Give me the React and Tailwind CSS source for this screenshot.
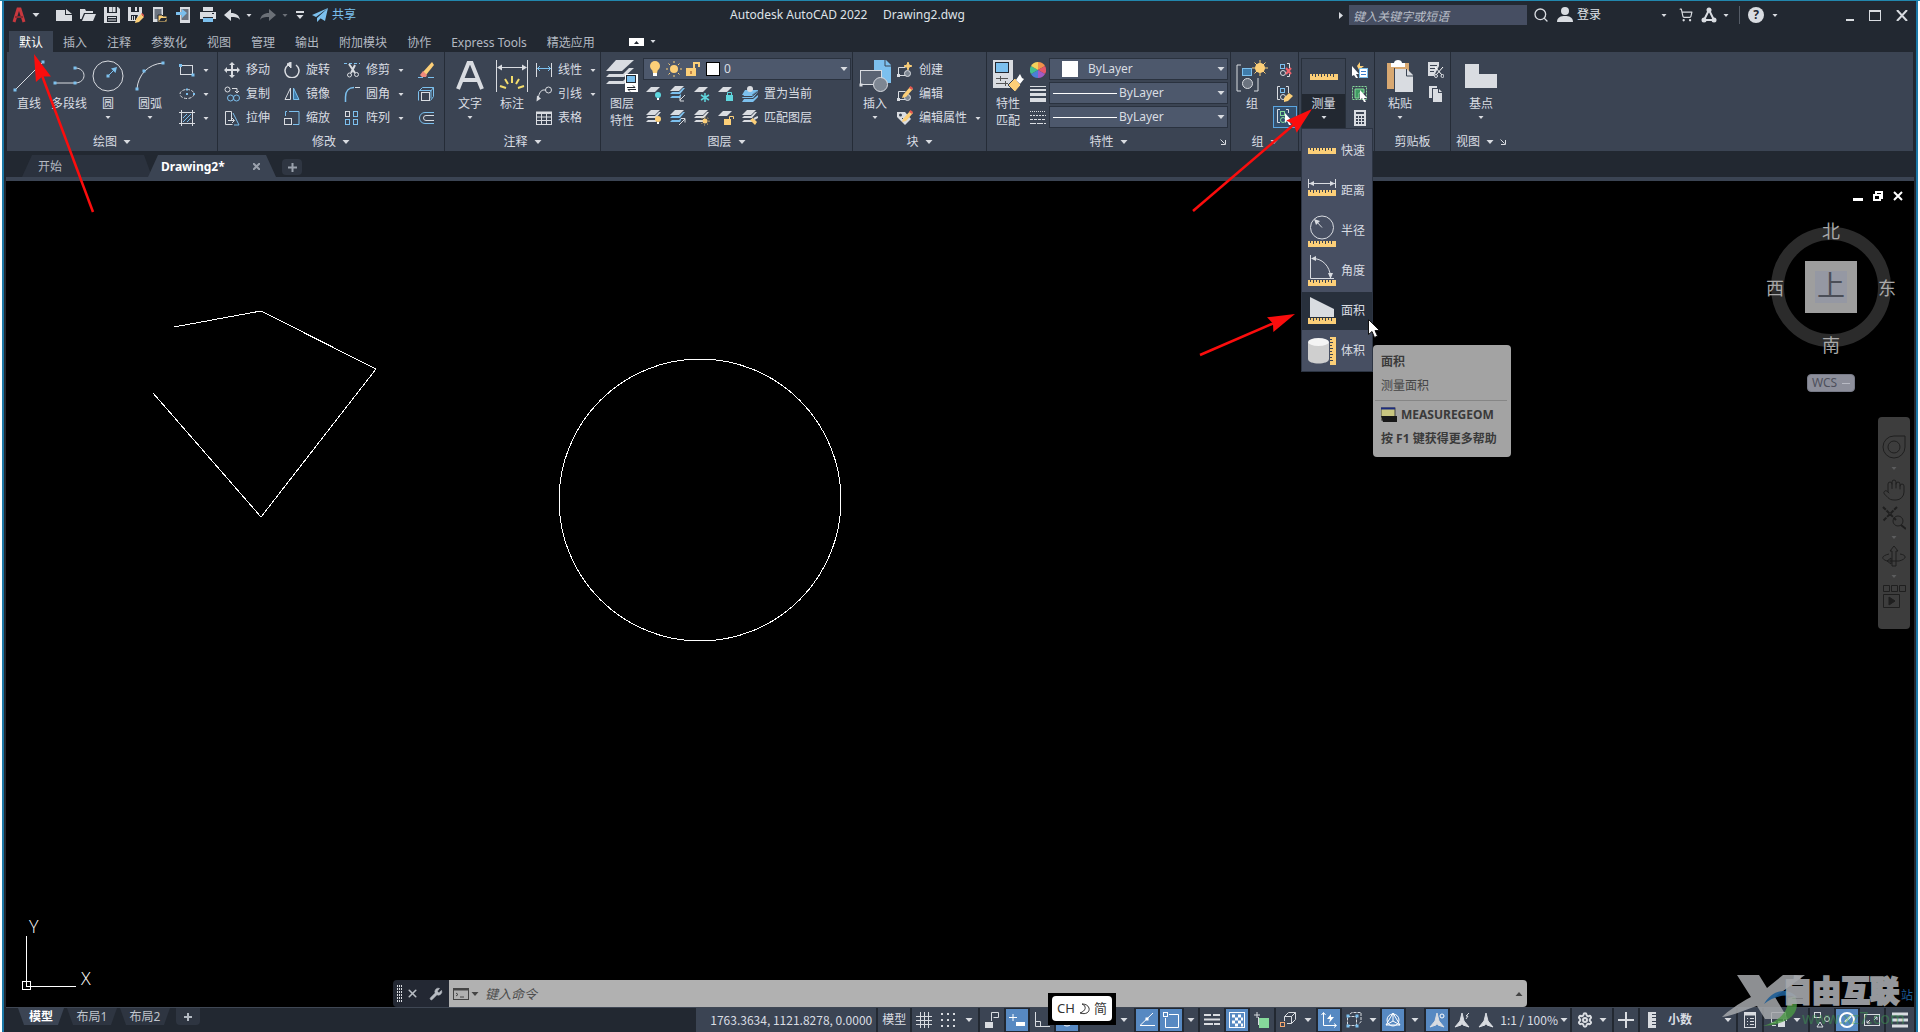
import { Search, Wrench, ShoppingCart, Settings, Hand, X } from "lucide-react"

const W = "#d9dce1"
const B = "#7cc0ee"
const Y = "#fccf78"
const G = "#86d99b"

const Svg = ({ w = 16, h = w, vb, children, className = "" }) => (
  <svg
    width={w}
    height={h}
    viewBox={vb || `0 0 ${w} ${h}`}
    fill="none"
    stroke={W}
    aria-hidden="true"
    className={`shrink-0 ${className}`}
  >
    {children}
  </svg>
)

const Caret = ({ big, className = "" }) =>
  big ? (
    <Svg w={8} h={4} className={className}>
      <path d="M0.5 0h7L4 4z" fill={W} stroke="none" />
    </Svg>
  ) : (
    <Svg w={6} h={3} className={className}>
      <path d="M0.5 0h5L3 3z" fill={W} stroke="none" />
    </Svg>
  )

const Dot = ({ x, y, c = B, s = 3 }) => (
  <rect x={x - s / 2} y={y - s / 2} width={s} height={s} fill={c} stroke="none" />
)

/* ---------- quick access icons ---------- */

const quickIcons = [
  {
    name: "新建",
    icon: (
      <g fill={W} stroke="none">
        <path d="M0 3h9v5h7v6H0z" />
        <path d="M10 2l6 5h-6z" />
      </g>
    ),
  },
  {
    name: "打开",
    icon: (
      <g fill={W} stroke="none">
        <path d="M0 2h5l1 2h7v2H4L1.5 12H0z" />
        <path d="M5 7h11l-3 7H2z" />
      </g>
    ),
  },
  {
    name: "保存",
    icon: (
      <g stroke="none">
        <path d="M0 0h14l2 2v14H0z" fill={W} />
        <path d="M3 0h10v6H3zM3 9h10v6H3z" fill="#222831" />
        <path d="M8.5 0h3v5h-3zM4 10h8v1H4zM4 12.5h8v1H4zM5 0h3v5H5z" fill={W} />
      </g>
    ),
  },
  {
    name: "另存为",
    icon: (
      <g stroke="none">
        <path d="M0 0h14v8l-5 6H0z" fill={W} />
        <path d="M3 0h8v5H3zM3 8h7l-2 5H3z" fill="#222831" />
        <path d="M7 0h2v4H7zM4 9h1v4H4zM6 9h1v4H6z" fill={W} />
        <path d="M8 12l5-5 3 3-5 5-4 1z" fill={Y} />
        <path d="M13 7l1-1 2 2v2z" fill="#e4574f" />
      </g>
    ),
  },
  {
    name: "从移动设备打开",
    icon: (
      <g stroke="none">
        <path d="M1 0h10v15H1z" fill={W} />
        <path d="M2.5 2h7v10h-7z" fill="#6b737f" />
        <path d="M6 8h4l1 1h4v6H6z" fill={Y} stroke="#222831" />
        <path d="M7 14l2-3h6l-2 3z" fill="#222831" />
      </g>
    ),
  },
  {
    name: "保存到移动设备",
    icon: (
      <g stroke="none">
        <path d="M4 0h10v16H4z" fill={W} />
        <path d="M5.5 2h7v11h-7z" fill="#6b737f" />
        <path d="M0 5h6V2l5 4-5 5V8H0z" fill={B} />
      </g>
    ),
  },
  {
    name: "打印",
    icon: (
      <g stroke="none">
        <path d="M3 0h10v4H3zM0 5h16v7h-3v-2H3v2H0z" fill={W} />
        <path d="M3 11h10v4H3z" fill={B} />
        <path d="M12 6h2v1h-2z" fill="#222831" />
      </g>
    ),
  },
]

/* ---------- draw ---------- */

const LineIcon = (
  <Svg w={32}>
    <path d="M2 30L30 2" />
    <Dot x={2} y={30} />
    <Dot x={30} y={2} />
  </Svg>
)
const PolylineIcon = (
  <Svg w={32}>
    <path d="M2 23h20c12 0 12-15 0-15" />
    <Dot x={2} y={23} />
    <Dot x={22} y={23} />
    <Dot x={22} y={8} />
  </Svg>
)
const CircleIcon = (
  <Svg w={32}>
    <circle cx="16" cy="16" r="15" />
    <path d="M16 16l7-7" stroke={B} />
    <path d="M25 7l-1.5 6-4.5-4.5z" fill={B} stroke="none" />
    <Dot x={16} y={16} />
  </Svg>
)
const ArcIcon = (
  <Svg w={32}>
    <path d="M3 29C4 15 14 4 29 3" />
    <Dot x={3} y={29} />
    <Dot x={10} y={11} />
    <Dot x={29} y={3} />
  </Svg>
)
const RectIcon = (
  <Svg>
    <rect x="1.5" y="3.5" width="12" height="9" />
    <Dot x={1.5} y={3.5} />
    <Dot x={14} y={13} />
  </Svg>
)
const EllipseIcon = (
  <Svg>
    <ellipse cx="8" cy="8" rx="7" ry="4.5" strokeDasharray="3 1.5" />
    <Dot x={8} y={8} s={2} />
    <Dot x={8} y={3.5} s={2} />
    <Dot x={15} y={8} s={2} />
  </Svg>
)
const HatchIcon = (
  <Svg>
    <path d="M0 2.5h16M0 13.5h16M2.5 0v16M13.5 0v16" />
    <path d="M4 8l4-4M4 12l8-8M8 12l4-4" stroke={B} />
  </Svg>
)

/* ---------- modify ---------- */

const MoveIcon = (
  <Svg>
    <path d="M8 2v12M2 8h12" strokeWidth="2" />
    <path d="M8 0l3 3H5zM8 16l3-3H5zM0 8l3-3v6zM16 8l-3-3v6z" fill={W} stroke="none" />
  </Svg>
)
const CopyIcon = (
  <Svg>
    <circle cx="3.5" cy="3.5" r="2.5" />
    <circle cx="6.5" cy="12" r="3" stroke={B} />
    <circle cx="12.5" cy="12" r="3" stroke={B} />
    <path d="M8 2.5h5v4M11 5l2 2 2-2" />
  </Svg>
)
const StretchIcon = (
  <Svg>
    <path d="M1.5 1.5h6v9M1.5 1.5v13h7M4 10.5h6M8 8l2.5 2.5L8 13" />
    <path d="M9 3l6 12h-5" stroke={B} />
  </Svg>
)
const RotateIcon = (
  <Svg>
    <path d="M4 3a7 7 0 1 0 8 0" strokeWidth="1.5" />
    <path d="M7 0v6L3 2z" fill={W} />
  </Svg>
)
const MirrorIcon = (
  <Svg>
    <path d="M6.5 2v11.5H1z" />
    <path d="M9.5 2v11.5H15z" stroke={B} fill="#3f7cab" />
  </Svg>
)
const ScaleIcon = (
  <Svg>
    <path d="M5 1.5h10v13H9" stroke={B} />
    <rect x="0.5" y="8.5" width="7" height="6" />
    <path d="M3 1.5H1.5V6" stroke={B} />
  </Svg>
)
const TrimIcon = (
  <Svg>
    <path d="M0 1.5h16" stroke={B} strokeDasharray="3 2" />
    <path d="M5 2l6 9M11 3l-4 8" strokeWidth="2" />
    <circle cx="5.5" cy="13" r="2" />
    <circle cx="12.5" cy="12.5" r="2" />
  </Svg>
)
const FilletIcon = (
  <Svg>
    <path d="M1.5 16V11C1.5 5 5 1.5 10 1.5" stroke={B} strokeWidth="1.5" />
    <path d="M11 1.5h5" />
  </Svg>
)
const ArrayIcon = (
  <Svg>
    <rect x="1.5" y="1.5" width="4" height="5" />
    <rect x="9.5" y="1.5" width="4" height="5" stroke={B} />
    <rect x="1.5" y="9.5" width="4" height="5" stroke={B} />
    <rect x="9.5" y="9.5" width="4" height="5" stroke={B} />
  </Svg>
)
const EraseIcon = (
  <Svg>
    <path d="M5 10L14 0l2 3-8 10z" fill={Y} stroke="none" />
    <path d="M2 13l3-4 4 4-1 2H4z" fill="#f08a7c" stroke="none" />
    <path d="M0 15.5h5M10 15.5h6" stroke={B} />
  </Svg>
)
const ExplodeIcon = (
  <Svg>
    <rect x="3.5" y="6.5" width="8" height="8" />
    <path d="M0.5 5.5l4-4h11v9l-3 4M0.5 5.5v9M12.5 5.5l3-4M1 4.5h12v8" stroke={B} />
  </Svg>
)
const OffsetIcon = (
  <Svg>
    <path d="M16 2.5H7a5.5 5.5 0 0 0 0 11h9" stroke={B} />
    <path d="M16 5.5H8a2.5 2.5 0 0 0 0 5h8" />
  </Svg>
)

/* ---------- annotate ---------- */

const TextIcon = (
  <Svg w={32}>
    <path d="M4 29L14.5 3h3L28 29M8.5 20h15" strokeWidth="4" />
  </Svg>
)
const DimIcon = (
  <Svg w={32}>
    <path d="M0.5 0v32M31.5 0v32M2 7.5h28" />
    <path d="M1 7.5l5-3v6zM31 7.5l-5-3v6z" fill={W} stroke="none" />
    <path
      d="M16 16v7M9 19l3 5M23 19l-3 5M4 26l6 2M28 26l-6 2"
      stroke="#f3dc6c"
      strokeWidth="2"
    />
  </Svg>
)
const LinearIcon = (
  <Svg>
    <path d="M0.5 1v14M15.5 1v14" />
    <path d="M1 6.5h14M4 4L1.5 6.5 4 9M12 4l2.5 2.5L12 9" stroke={B} />
  </Svg>
)
const LeaderIcon = (
  <Svg>
    <circle cx="12.5" cy="4" r="3" />
    <path d="M10 4H7C4 5 3 8 2 13" />
    <path d="M0.5 15.5l0.5-6 4 3z" fill={W} stroke="none" />
  </Svg>
)
const TableIcon = (
  <Svg>
    <rect x="0.5" y="2" width="15" height="12.5" />
    <path d="M1 3h14" strokeWidth="2" />
    <path d="M1 7h14M1 10.5h14M5.5 3v11M10.5 3v11" />
  </Svg>
)

/* ---------- layers ---------- */

const LayerPropsIcon = (
  <Svg w={32}>
    <g fill={W} stroke="none">
      <path d="M10 0h18L16 11H0z" />
      <path d="M3 14h14l6-6 5 0-10 9H0zM3 21h14l6-6 5 0-10 9H0z" />
      <rect x="19" y="14" width="13" height="18" fill="#fff" />
    </g>
    <rect x="20.5" y="15.5" width="9" height="7" fill={B} stroke="#222831" />
    <path d="M21 27.5h8l-2-2M30 29.5h-8l2 2" stroke="#222831" />
  </Svg>
)

const Sheets = ({ blue }) => (
  <g fill={W} stroke="none">
    <path d="M5 0h9L9 5H0z" />
    <path d="M2 6h7l4-4h2l-5 6H0zM2 10h7l2-2v2l-1 2H0z" fill={blue ? B : W} />
  </g>
)
const Sheet = () => <path d="M5 1h9L9 6H0z" fill={W} stroke="none" />
const Bulb = ({ x, y, c }) => (
  <g stroke="none">
    <circle cx={x} cy={y} r="3" fill={c} />
    <rect x={x - 1} y={y + 3} width="2" height="2" fill="#fff" />
  </g>
)

const layerRow2 = [
  <Svg key="off"><Sheet /><Bulb x={12} y={9} c="#5fd6de" /></Svg>,
  <Svg key="iso"><Sheets blue /><path d="M15 9l-5 5M10 11v4h4" /></Svg>,
  <Svg key="frz"><Sheet /><path d="M11 7v9M7 9l8 5M15 9l-8 5" stroke="#5fd6de" strokeWidth="1.5" /></Svg>,
  <Svg key="lck"><Sheet /><rect x="8" y="9" width="7" height="6" fill="#5fd6de" stroke="none" /><path d="M9.5 9V6.5h4V9" stroke="#5fd6de" /></Svg>,
]
const layerRow3 = [
  <Svg key="on"><Sheets /><Bulb x={12} y={9} c={Y} /></Svg>,
  <Svg key="unl"><Sheets blue /><path d="M9 15l6-6M11 8.5h4v4" /></Svg>,
  <Svg key="thw"><Sheets /><circle cx="11" cy="11" r="2.5" fill={Y} stroke="none" /><circle cx="11" cy="11" r="4" stroke={Y} strokeDasharray="1 2" /></Svg>,
  <Svg key="ulk"><Sheet /><rect x="6" y="9" width="7" height="6" fill={Y} stroke="none" /><path d="M11.5 9V6.5h4V9" stroke={Y} /></Svg>,
]
const MakeCurrentIcon = (
  <Svg>
    <g fill={B} stroke="none">
      <path d="M3 4h13l-6 5H0zM2 9h9l5-5v2l-5 6H0zM2 13h9l5-4v2l-5 5H0z" />
    </g>
    <path d="M0 10.5h10l6-5" stroke="#3b4453" />
    <circle cx="8" cy="3" r="3" fill={W} stroke="none" />
  </Svg>
)
const MatchLayerIcon = (
  <Svg>
    <Sheets />
    <path d="M8 10l3-2 4 4-2 3z" fill={Y} stroke="none" />
    <path d="M12 9l4-2" strokeWidth="2" />
  </Svg>
)

/* ---------- block ---------- */

const InsertIcon = (
  <Svg w={32}>
    <path d="M15 0h12l5 5v18H15z" fill={B} stroke="none" />
    <path d="M26 0v6h6" stroke="#3b4453" />
    <rect x="1.5" y="10.5" width="21" height="14" fill="#5a6372" />
    <circle cx="21.5" cy="24.5" r="7" fill="#7d8692" />
    <Dot x={2} y={25} c={W} />
  </Svg>
)
const BlockBase = () => (
  <g>
    <path d="M1.5 13.5v-8h7M1.5 13.5h7" />
    <circle cx="10.5" cy="11.5" r="3" fill="#7d8692" />
    <Dot x={1.5} y={13.5} c={W} />
  </g>
)
const CreateIcon = (
  <Svg>
    <BlockBase />
    <path d="M11 0l1 3 3 1-3 1-1 3-1-3-3-1 3-1z" fill={Y} stroke={Y} />
  </Svg>
)
const Pencil = () => (
  <g stroke="none">
    <path d="M6 9l7-8 3 2-7 8-4 1z" fill={Y} />
    <path d="M12 2l1.5-2L16 2l-1 2z" fill="#e4574f" />
  </g>
)
const EditIcon = (
  <Svg>
    <BlockBase />
    <Pencil />
  </Svg>
)
const AttrIcon = (
  <Svg>
    <path d="M0 2h8l6 7-6 6-8-8z" fill={W} stroke="none" />
    <circle cx="3.5" cy="5" r="1.5" fill="#3b4453" stroke="none" />
    <path d="M5 8l3 3 5-6" stroke="#3b4453" />
    <Pencil />
  </Svg>
)

/* ---------- properties ---------- */

const MatchPropsIcon = (
  <Svg w={32}>
    <path d="M1 0h20v28H1z" fill={W} stroke="none" />
    <rect x="3.5" y="2.5" width="13" height="10" fill={B} stroke="#222831" />
    <path d="M4 18.5h12M4 23.5h12M8.5 16v5M13.5 21v5" stroke="#555" />
    <path d="M16 25l7-7 6 7-6 7z" fill={Y} stroke="#3b4453" />
    <path d="M24 20l4 4 4-5-2-1-2-4z" fill="#fff" stroke="none" />
  </Svg>
)
const ColorWheel = (
  <Svg>
    <g stroke="none">
      <path d="M8 8V0a8 8 0 0 1 7 4z" fill="#f2914a" />
      <path d="M8 8l7-4a8 8 0 0 1 0 8z" fill="#e5566a" />
      <path d="M8 8l7 4a8 8 0 0 1-7 4z" fill="#a25bc4" />
      <path d="M8 8v8a8 8 0 0 1-7-4z" fill="#4b7fd6" />
      <path d="M8 8l-7 4a8 8 0 0 1 0-8z" fill="#44c08f" />
      <path d="M8 8L1 4a8 8 0 0 1 7-4z" fill="#f3d05b" />
    </g>
  </Svg>
)
const WeightIcon = (
  <Svg>
    <path d="M0 0.5h16" />
    <path d="M0 4h16" strokeWidth="2" />
    <path d="M0 8.5h16" strokeWidth="3" />
    <path d="M0 14h16" strokeWidth="4" />
  </Svg>
)
const LineTypeIcon = (
  <Svg>
    <path d="M0 1.5h16" strokeDasharray="1 1" />
    <path d="M0 5.5h16" strokeDasharray="2 1" />
    <path d="M0 9.5h16" strokeDasharray="3 1" />
    <path d="M0 13.5h16" strokeDasharray="6 1" />
  </Svg>
)

/* ---------- group / utilities / clipboard / view ---------- */

const GroupIcon = (
  <Svg w={32}>
    <path d="M5 5H1v26h4M18 31h4V18" />
    <rect x="6.5" y="8.5" width="9" height="7" fill="#3f7cab" stroke={B} />
    <circle cx="11.5" cy="23.5" r="5" fill="#6b737f" />
    <circle cx="24" cy="8" r="5" fill={Y} stroke="none" />
    <path d="M24 0v16M16 8h16M18.5 2.5l11 11M29.5 2.5l-11 11" stroke={Y} />
  </Svg>
)
const GroupBase = ({ c = B }) => (
  <g>
    <rect x="3.5" y="2.5" width="4" height="4" stroke={c} />
    <circle cx="6" cy="11" r="2.5" stroke={c === B ? W : c} />
  </g>
)
const UngroupIcon = (
  <Svg>
    <GroupBase />
    <path d="M10 1.5h2.5V6M10 14.5h2.5V12" />
    <path d="M9 6l5 6M14 6l-5 6" stroke="#f0626b" strokeWidth="2" />
  </Svg>
)
const GroupEditIcon = (
  <Svg>
    <path d="M3 0.5H0.5v13H3M9 0.5h2.5V7" />
    <GroupBase />
    <path d="M7 12l5-5 4 3-5 5-4 1z" fill={Y} stroke="none" />
  </Svg>
)
const GroupSelIcon = (
  <Svg>
    <path d="M3 0.5H0.5v13H3M9 0.5h2.5V4" />
    <GroupBase c={G} />
    <path d="M8 4l7 8h-3l2 4-2 0-2-4-2 2z" fill="#fff" stroke="none" />
  </Svg>
)
const Ruler = ({ y = 0 }) => (
  <g transform={`translate(0 ${y})`}>
    <rect width="28" height="6" fill={Y} stroke="none" />
    <path
      d="M2.5 0v2M5.5 0v3M8.5 0v2M11.5 0v3M14.5 0v2M17.5 0v3M20.5 0v2M23.5 0v3"
      stroke="#3b4453"
    />
  </g>
)
const QuickSelectIcon = (
  <Svg>
    <path d="M0 4l7 8H4l2 4-2 0-2-3-2 1z" fill="#fff" stroke="none" />
    <path d="M5 4l3-4v4h4l-5 4z" fill={Y} stroke="none" />
    <rect x="7.5" y="6.5" width="8" height="9" fill="#fff" stroke={B} />
    <path d="M9 9.5h5M9 12.5h5" stroke="#3d7ecb" />
  </Svg>
)
const SelectAllIcon = (
  <Svg>
    <rect x="0.5" y="0.5" width="14" height="13" stroke={G} strokeDasharray="2 1" />
    <path d="M3 3h9v4H7v5H3z" fill="#3f9a63" stroke={G} />
    <path d="M8 4l7 8h-3l2 4-2 0-2-4-2 2z" fill="#fff" stroke="none" />
  </Svg>
)
const CalcIcon = (
  <Svg>
    <rect x="2" width="12" height="16" fill={W} stroke="none" />
    <path d="M4 3h8" stroke="#3b4453" strokeWidth="2" />
    <path d="M4 7h8M4 10h8M4 13h8" stroke="#3b4453" strokeWidth="2" strokeDasharray="2 1" />
  </Svg>
)
const PasteIcon = (
  <Svg w={28} h={32}>
    <g stroke="none">
      <path d="M1 3h22v26H1z" fill="#d8a871" />
      <path d="M5 3h3c0-4 8-4 8 0h3v4H5z" fill="#fff" />
      <path d="M9 9h12l6 6v17H9z" fill={W} />
    </g>
    <path d="M20.5 9v7H28M8.5 8v24" stroke="#3b4453" />
  </Svg>
)
const CutIcon = (
  <Svg>
    <path d="M0 0h11v4L6 14H0z" fill={W} stroke="none" />
    <path d="M2 3.5h7M2 6.5h5M2 9.5h4" stroke="#3b4453" />
    <path d="M7 5l7 8M15 5l-7 8" stroke="#fff" />
    <circle cx="8" cy="14" r="1.5" />
    <circle cx="14.5" cy="14" r="1.5" />
  </Svg>
)
const CopyClipIcon = (
  <Svg>
    <g fill={W} stroke="none">
      <path d="M1 0h8v2H4v10H1z" />
      <path d="M5 3h5v4h4v9H5z" />
      <path d="M11 3l3 3h-3z" />
    </g>
  </Svg>
)
const BaseIcon = (
  <Svg w={32}>
    <path d="M0 4h14v10h18v14H0z" fill={W} stroke="none" />
  </Svg>
)
const Launcher = (
  <Svg w={6}>
    <path d="M0.5 0.5l4 4M5.5 1v4.5H1" />
  </Svg>
)

/* ---------- ribbon building blocks ---------- */

const Panel = ({ label, caret = true, launcher, className = "", children }) => (
  <section className={`flex shrink-0 flex-col border-r border-[#252c37] pt-1.5 ${className}`}>
    <div className="flex h-[73px] items-start">{children}</div>
    <div className="relative flex h-5 items-center justify-center gap-1.5 pt-0.5">
      <span>{label}</span>
      {caret && <Caret big />}
      {launcher && <span className="absolute right-1">{Launcher}</span>}
    </div>
  </section>
)

const Big = ({ icon, label, second, caret, className = "" }) => (
  <button className={`flex shrink-0 flex-col items-center pt-0.5 leading-[17px] ${className}`}>
    {icon}
    <span className="mt-[3px] whitespace-nowrap">{label}</span>
    {second && <span>{second}</span>}
    {caret && <Caret className="mt-1" />}
  </button>
)

const Small = ({ icon, label, caret, title }) => (
  <button className="flex h-6 items-center gap-1.5 whitespace-nowrap" aria-label={title}>
    {icon}
    {label && <span>{label}</span>}
    {caret && <Caret className="ml-0.5" />}
  </button>
)

const Combo = ({ label, value, className = "", children }) => (
  <label
    className={`flex h-[22px] items-center border border-[#2a323f] bg-[#4d586c] pr-0.5 ${className}`}
  >
    {children}
    <select
      aria-label={label}
      defaultValue={value}
      className="min-w-0 flex-1 appearance-none bg-transparent leading-5 outline-none"
    >
      <option>{value}</option>
    </select>
    <Caret big />
  </label>
)

const measureItems = [
  { label: "快速", icon: <Svg w={28}><Ruler y={11} /></Svg> },
  {
    label: "距离",
    icon: (
      <Svg w={28}>
        <path d="M0.5 2v9M27.5 2v9M1 6.5h26" />
        <path d="M1 6.5l5-2.5v5zM27 6.5L22 4v5z" fill={W} stroke="none" />
        <Ruler y={13} />
      </Svg>
    ),
  },
  {
    label: "半径",
    icon: (
      <Svg w={28} h={32}>
        <circle cx="14" cy="12.5" r="11.5" />
        <path d="M14 12.5L8 6" />
        <path d="M6 4l6 2-4 4z" fill={W} stroke="none" />
        <Ruler y={26} />
      </Svg>
    ),
  },
  {
    label: "角度",
    icon: (
      <Svg w={28} h={32}>
        <path d="M2.5 0v23.5H26M4 3.5C14 3 22 11 22.5 22" />
        <path d="M3 3.5L8 1v5zM22.5 24L20 18h5z" fill={W} stroke="none" />
        <Ruler y={25} />
      </Svg>
    ),
  },
  {
    label: "面积",
    active: true,
    icon: (
      <Svg w={28}>
        <path d="M2 0l24 12v8H2z" fill={W} stroke="none" />
        <Ruler y={21} />
      </Svg>
    ),
  },
  {
    label: "体积",
    icon: (
      <Svg w={28}>
        <path d="M0 5v17c0 6 21 6 21 0V5z" fill="#cfcfcf" stroke="none" />
        <ellipse cx="10.5" cy="5" rx="10.5" ry="4" fill="#f4f4f4" stroke="none" />
        <rect x="22" width="6" height="28" fill={Y} stroke="none" />
        <path
          d="M22 2.5h2M22 5.5h3M22 8.5h2M22 11.5h3M22 14.5h2M22 17.5h3M22 20.5h2M22 23.5h3"
          stroke="#3b4453"
        />
      </Svg>
    ),
  },
]

const MeasureTooltip = () => (
  <div
    role="tooltip"
    className="absolute top-[216px] left-[71px] z-20 h-28 w-[138px] rounded bg-[#a3a3a3] px-2 pt-[7px] text-[#3a3a3a]"
  >
    <p className="h-5 font-bold leading-5">面积</p>
    <p className="mt-1 h-5 leading-5 text-[#454545]">测量面积</p>
    <hr className="mt-1 -mr-1 -ml-1.5 border-[#868686]" />
    <p className="mt-1 flex h-5 items-center gap-1 font-bold">
      <Svg>
        <rect x="0" y="1" width="14" height="12" fill="#c9c67f" stroke="#444" />
        <path d="M0 1.5h14" stroke="#1c2c80" strokeWidth="2" />
        <path d="M0 9h16v6H2z" fill="#181818" stroke="none" />
      </Svg>
      MEASUREGEOM
    </p>
    <p className="mt-1 whitespace-nowrap font-bold leading-5">按 F1 键获得更多帮助</p>
  </div>
)

const MeasureMenu = () => (
  <div className="absolute top-[70px] left-0 z-20 w-[72px] border border-[#2c3442] bg-[#474f62] pt-0.5">
    {measureItems.map((item) => (
      <button
        key={item.label}
        className={
          item.active
            ? "flex h-10 w-full items-center gap-[5px] border-y border-[#474f62] bg-[#28303c] pl-1.5"
            : "flex h-10 w-full items-center gap-[5px] pl-1.5"
        }
      >
        {item.icon}
        <span>{item.label}</span>
      </button>
    ))}
    <MeasureTooltip />
    <Svg w={12} h={19} className="absolute top-[190px] left-[66px] z-30">
      <path d="M0.5 0.5v15l3.5-3 2.5 6 3-1.5-2.5-5.5h4.5z" fill="#fff" stroke="#111" />
    </Svg>
  </div>
)

const Ribbon = () => (
  <div className="mx-px flex h-[99px] bg-[#3b4453]">
    <Panel label="绘图" className="w-[211px]">
      <Big icon={LineIcon} label="直线" className="w-11" />
      <Big icon={PolylineIcon} label="多段线" className="w-9" />
      <Big icon={CircleIcon} label="圆" caret className="w-[42px]" />
      <Big icon={ArcIcon} label="圆弧" caret className="w-[42px]" />
      <div className="ml-2">
        <Small icon={RectIcon} caret title="矩形" />
        <Small icon={EllipseIcon} caret title="椭圆" />
        <Small icon={HatchIcon} caret title="图案填充" />
      </div>
    </Panel>

    <Panel label="修改" className="w-[227px]">
      <div className="flex gap-3.5 pl-1.5">
        <div>
          <Small icon={MoveIcon} label="移动" />
          <Small icon={CopyIcon} label="复制" />
          <Small icon={StretchIcon} label="拉伸" />
        </div>
        <div>
          <Small icon={RotateIcon} label="旋转" />
          <Small icon={MirrorIcon} label="镜像" />
          <Small icon={ScaleIcon} label="缩放" />
        </div>
        <div>
          <Small icon={TrimIcon} label="修剪" caret />
          <Small icon={FilletIcon} label="圆角" caret />
          <Small icon={ArrayIcon} label="阵列" caret />
        </div>
        <div>
          <Small icon={EraseIcon} title="删除" />
          <Small icon={ExplodeIcon} title="分解" />
          <Small icon={OffsetIcon} title="偏移" />
        </div>
      </div>
    </Panel>

    <Panel label="注释" className="w-[156px]">
      <Big icon={TextIcon} label="文字" caret className="ml-1 w-[42px]" />
      <Big icon={DimIcon} label="标注" className="w-[42px]" />
      <div className="ml-[3px]">
        <Small icon={LinearIcon} label="线性" caret />
        <Small icon={LeaderIcon} label="引线" caret />
        <Small icon={TableIcon} label="表格" />
      </div>
    </Panel>

    <Panel label="图层" className="w-[252px]">
      <Big icon={LayerPropsIcon} label="图层" second="特性" className="w-[42px]" />
      <div className="flex-1 pr-px">
        <Combo label="图层" value="0" className="mb-0.5 pl-1">
          <Svg w={14} h={18}>
            <circle cx="7" cy="6" r="5" fill={Y} stroke="none" />
            <path d="M4 9h6l-1 4H5z" fill={Y} stroke="none" />
            <path d="M5 13h4v3H5z" fill="#fff" stroke="none" />
          </Svg>
          <Svg className="ml-1">
            <circle cx="8" cy="8" r="4" fill={Y} stroke="none" />
            <path
              d="M8 0v2M8 14v2M0 8h2M14 8h2M2.5 2.5l1.5 1.5M12 12l1.5 1.5M13.5 2.5L12 4M4 12l-1.5 1.5"
              stroke={Y}
            />
          </Svg>
          <Svg className="ml-1">
            <rect x="0" y="7" width="10" height="8" fill={Y} stroke="none" />
            <path d="M8 7V2h5v4" stroke={Y} strokeWidth="2" />
            <path d="M5 10v3" stroke="#8a3c1c" />
          </Svg>
          <span className="mr-1 ml-1 size-3.5 shrink-0 border border-black bg-white" />
        </Combo>
        <div className="flex gap-2 pl-[3px]">
          {layerRow2.map((icon, i) => (
            <Small key={i} icon={icon} title={["关", "隔离", "冻结", "锁定"][i]} />
          ))}
          <Small icon={MakeCurrentIcon} label="置为当前" />
        </div>
        <div className="flex gap-2 pl-[3px]">
          {layerRow3.map((icon, i) => (
            <Small key={i} icon={icon} title={["打开", "取消隔离", "解冻", "解锁"][i]} />
          ))}
          <Small icon={MatchLayerIcon} label="匹配图层" />
        </div>
      </div>
    </Panel>

    <Panel label="块" className="w-[134px]">
      <Big icon={InsertIcon} label="插入" caret className="w-11" />
      <div>
        <Small icon={CreateIcon} label="创建" />
        <Small icon={EditIcon} label="编辑" />
        <Small icon={AttrIcon} label="编辑属性" caret />
      </div>
    </Panel>

    <Panel label="特性" launcher className="w-[244px]">
      <Big icon={MatchPropsIcon} label="特性" second="匹配" className="w-[42px]" />
      <div className="flex w-5 flex-col pl-px">
        <span className="flex h-6 items-center">{ColorWheel}</span>
        <span className="flex h-6 items-center">{WeightIcon}</span>
        <span className="flex h-6 items-center">{LineTypeIcon}</span>
      </div>
      <div className="flex flex-1 flex-col gap-0.5 pr-0.5">
        <Combo label="对象颜色" value="ByLayer" className="pl-3">
          <span className="mr-2.5 size-4 bg-white" />
        </Combo>
        <Combo label="线宽" value="ByLayer" className="pl-[3px]">
          <span className="mr-0.5 h-px w-16 bg-white" />
        </Combo>
        <Combo label="线型" value="ByLayer" className="pl-[3px]">
          <span className="mr-0.5 h-px w-16 bg-white" />
        </Combo>
      </div>
    </Panel>

    <Panel label="组" className="w-[68px]">
      <Big icon={GroupIcon} label="组" className="w-[42px]" />
      <div className="flex w-6 flex-col items-center">
        <Small icon={UngroupIcon} title="解除编组" />
        <Small icon={GroupEditIcon} title="组编辑" />
        <button
          aria-label="启用/禁用组选择"
          className="flex h-[22px] w-6 items-center justify-center border border-[#5aa5e0] bg-[#34506e]"
        >
          {GroupSelIcon}
        </button>
      </div>
    </Panel>

    <Panel label="" caret={false} className="w-[76px]">
      <div className="relative ml-0.5 w-[45px]">
        <button className="flex h-[70px] w-full flex-col border border-b-0 border-[#28303b]">
          <span className="flex h-[35px] w-full items-center justify-center">
            <Svg w={28} h={6}>
              <Ruler />
            </Svg>
          </span>
          <span className="flex w-full flex-1 flex-col items-center bg-[#222831] pt-px leading-[17px]">
            <span>测量</span>
            <Caret className="mt-1" />
          </span>
        </button>
        <MeasureMenu />
      </div>
      <div className="ml-1.5">
        <Small icon={QuickSelectIcon} title="快速选择" />
        <Small icon={SelectAllIcon} title="全部选择" />
        <Small icon={CalcIcon} title="快速计算器" />
      </div>
    </Panel>

    <Panel label="剪贴板" caret={false} className="w-[76px]">
      <Big icon={PasteIcon} label="粘贴" caret className="ml-1 w-[42px]" />
      <div className="ml-[7px]">
        <Small icon={CutIcon} title="剪切" />
        <Small icon={CopyClipIcon} title="复制" />
      </div>
    </Panel>

    <section className="flex w-[60px] flex-col pt-1.5">
      <div className="flex h-[73px] justify-center">
        <Big icon={BaseIcon} label="基点" caret />
      </div>
      <div className="flex h-5 items-center gap-1.5 pt-0.5 pl-[5px]">
        <span>视图</span>
        <Caret big />
        {Launcher}
      </div>
    </section>
  </div>
)

/* ---------- title bar ---------- */

const TitleBar = () => (
  <header className="flex h-[30px] items-center px-1.5 pb-0.5 text-[#dfe3e8]">
    <button className="flex items-center gap-1.5" aria-label="应用程序菜单">
      <Svg w={14} h={16}>
        <path d="M2 15L6 2h2l4 13" stroke="#c8383e" strokeWidth="3" />
        <path d="M3 10h8" stroke="#8e2a30" strokeWidth="2" />
      </Svg>
      <Caret big />
    </button>
    <div className="ml-4 flex items-center gap-2">
      {quickIcons.map((q) => (
        <button key={q.name} aria-label={q.name}>
          <Svg>{q.icon}</Svg>
        </button>
      ))}
    </div>
    <button className="ml-2 flex items-center gap-1.5" aria-label="放弃">
      <Svg>
        <path d="M0 8l7-6v4c5 0 8 2 9 7-2-3-5-3-9-3v4z" fill={W} stroke="none" />
      </Svg>
      <Caret />
    </button>
    <button className="ml-2 flex items-center gap-1.5 opacity-40" aria-label="重做">
      <Svg>
        <path d="M16 8L9 2v4C4 6 1 8 0 13c2-3 5-3 9-3v4z" fill={W} stroke="none" />
      </Svg>
      <Caret />
    </button>
    <button className="ml-2" aria-label="自定义快速访问工具栏">
      <Svg w={8} h={8}>
        <path d="M0 1h8" strokeWidth="2" />
        <path d="M0.5 4h7L4 8z" fill={W} stroke="none" />
      </Svg>
    </button>
    <button className="ml-2 flex items-center gap-1 text-[#7cc0ee]">
      <Svg>
        <path d="M16 1L0 8l4 2zM16 1L5 11v4l3-3zM16 1l-8 10 5 3z" fill={B} stroke="none" />
      </Svg>
      共享
    </button>

    <h1 className="flex-1 text-center whitespace-pre">Autodesk AutoCAD 2022     Drawing2.dwg</h1>

    <div className="flex items-center">
      <Svg w={4} h={7}>
        <path d="M0 0l4 3.5L0 7z" fill={W} stroke="none" />
      </Svg>
      <input
        aria-label="搜索"
        placeholder="键入关键字或短语"
        className="ml-1.5 h-5 w-[178px] bg-[#464e62] px-1 font-[Noto_Sans_CJK_SC,sans-serif] italic outline-none placeholder:text-[#b9bec8]"
      />
      <Search size={16} color={W} strokeWidth={2} className="ml-1.5" />
      <button className="ml-2 flex items-center gap-1">
        <Svg>
          <circle cx="8" cy="4" r="4" fill={W} stroke="none" />
          <path d="M0 15c0-5 4-6 8-6s8 1 8 6z" fill={W} stroke="none" />
        </Svg>
        登录
      </button>
      <Caret className="ml-[60px]" />
      <ShoppingCart size={14} color={W} strokeWidth={2} className="ml-3" />
      <button className="ml-2 flex items-center gap-1.5" aria-label="Autodesk App Store">
        <Svg>
          <path d="M8 3L3 13h10z" strokeWidth="2" />
          <circle cx="8" cy="3" r="2.5" fill={W} stroke="none" />
          <circle cx="3" cy="13" r="2.5" fill={W} stroke="none" />
          <circle cx="13" cy="13" r="2.5" fill={W} stroke="none" />
        </Svg>
        <Caret />
      </button>
      <span className="ml-2.5 h-[18px] w-px bg-[#555c67]" />
      <button className="ml-2 flex items-center gap-2" aria-label="帮助">
        <span className="flex size-4 items-center justify-center rounded-full bg-[#d9dce1] font-bold leading-4 text-[#222831]">
          ?
        </span>
        <Caret />
      </button>
      <div className="ml-[68px] flex items-center gap-[15px]">
        <button aria-label="最小化">
          <Svg w={8} h={12}>
            <path d="M0 11h8" strokeWidth="2" />
          </Svg>
        </button>
        <button aria-label="最大化">
          <Svg w={12} h={11}>
            <rect x="0.5" y="0.5" width="11" height="10" />
            <path d="M0 1h12" strokeWidth="2" />
          </Svg>
        </button>
        <button aria-label="关闭">
          <Svg w={12} h={11}>
            <path d="M1 0l10 11M11 0L1 11" strokeWidth="2" />
          </Svg>
        </button>
      </div>
    </div>
  </header>
)

const ribbonTabs = [
  "默认",
  "插入",
  "注释",
  "参数化",
  "视图",
  "管理",
  "输出",
  "附加模块",
  "协作",
  "Express Tools",
  "精选应用",
]

const RibbonTabs = () => (
  <nav className="flex h-[21px] items-center pl-[3px] text-[#b3b9c2]">
    {ribbonTabs.map((tab, i) => (
      <button
        key={tab}
        className={i === 0 ? "h-full bg-[#3b4453] px-2.5 pt-0.5 text-white" : "h-full px-2.5 pt-0.5"}
      >
        {tab}
      </button>
    ))}
    <button className="ml-6 flex items-center gap-1.5" aria-label="最小化功能区">
      <Svg w={15} h={8}>
        <rect width="15" height="8" fill="#fff" stroke="none" />
        <path d="M5 6l2.5-3L10 6z" fill="#222831" stroke="none" />
      </Svg>
      <Caret />
    </button>
  </nav>
)

const DocTabs = () => (
  <nav className="flex h-[30px] items-end border-b-4 border-[#3b4453] pl-4">
    <button className="h-[22px] w-[130px] bg-[#2b323e] pt-px pl-4 text-left text-[#b3b9c2] [clip-path:polygon(10px_0,calc(100%-8px)_0,100%_100%,0_100%)]">
      开始
    </button>
    <div className="-ml-1 flex h-[22px] w-[128px] items-center justify-between bg-[#3b4453] pt-px pr-4 pl-[13px] [clip-path:polygon(10px_0,calc(100%-10px)_0,100%_100%,0_100%)]">
      <button className="font-bold text-white">Drawing2*</button>
      <button aria-label="关闭图形">
        <Svg w={7}>
          <path d="M0 0l7 7M7 0L0 7" strokeWidth="2" stroke="#9aa1ac" />
        </Svg>
      </button>
    </div>
    <button
      aria-label="新图形"
      className="mb-0.5 ml-1.5 flex h-4 w-5 items-center justify-center rounded bg-[#2f3642]"
    >
      <Svg w={9}>
        <path d="M4.5 0v9M0 4.5h9" strokeWidth="2" stroke="#9aa1ac" />
      </Svg>
    </button>
  </nav>
)

/* ---------- drawing area ---------- */

const ViewCube = () => (
  <div className="absolute top-[38px] right-[15px] h-[172px] w-[136px] text-lg leading-[22px] text-[#a9a9a9]">
    <div className="absolute top-2 left-2 size-[120px] rounded-full border-[13px] border-[#2b2b2b]" />
    <div className="absolute top-[42px] left-[42px] flex size-[52px] items-center justify-center bg-[#9e9e9e]">
      <span className="flex size-8 items-center justify-center bg-[#9598a3] font-[Liberation_Serif,Noto_Sans_CJK_SC,serif] text-[28px] leading-8 text-[#4b4e57]">
        上
      </span>
    </div>
    <span className="absolute top-px left-[59px]">北</span>
    <span className="absolute top-[58px] left-[3px]">西</span>
    <span className="absolute top-[58px] left-[115px]">东</span>
    <span className="absolute top-[115px] left-[59px]">南</span>
    <button className="absolute top-[155px] left-11 flex h-[18px] w-12 items-center justify-between rounded border border-[#777a87] bg-[#8d8f9b] px-1 text-xs leading-4 text-[#4d4f5b]">
      WCS
      <span className="h-px w-2 bg-[#b8bac4]" />
    </button>
  </div>
)

const NavBar = () => (
  <div className="absolute top-[236px] right-1 flex h-[212px] w-8 flex-col items-center rounded bg-[#3d3d3d] pt-[18px]">
    <Svg w={24}>
      <g stroke="#1f1f1f">
        <path d="M12 1h11v11a11 11 0 1 1-11-11z" />
        <circle cx="12" cy="12" r="6" />
      </g>
    </Svg>
    <Caret className="mt-2 opacity-20" />
    <Hand size={24} color="#1f1f1f" strokeWidth={1} className="mt-2" />
    <Svg w={24} className="mt-1">
      <g stroke="#1f1f1f">
        <path d="M1 1l13 13M15 1L1 15" strokeWidth="2" strokeDasharray="4 1" />
        <circle cx="16" cy="15" r="5" />
        <path d="M19 19l5 4" strokeWidth="2" />
      </g>
    </Svg>
    <Caret className="mt-1.5 opacity-20" />
    <Svg w={24} className="mt-1.5">
      <g stroke="#1f1f1f">
        <path d="M10 21V6H8l4-5 4 5h-2v15z" />
        <path d="M7 9c-8 2-8 5-2 7h12c8-2 8-6 1-7M5 16l4-3v6z" />
      </g>
    </Svg>
    <Caret className="mt-1.5 opacity-20" />
    <Svg w={24} className="mt-1.5">
      <g stroke="#1f1f1f">
        <path d="M1.5 1.5h6v6h-6zM9.5 1.5h6v6h-6zM17.5 1.5h6v6h-6zM1.5 10.5h16v13h-16z" />
        <path d="M7 13l6 4-6 4z" fill="#1f1f1f" />
      </g>
    </Svg>
  </div>
)

const CommandLine = () => (
  <div className="absolute inset-x-[387px] bottom-0 flex h-[27px]">
    <div className="flex w-14 items-center rounded-l bg-[#232833] px-1">
      <Svg w={5} h={17}>
        <path d="M0.5 0v17M4.5 0v17M2.5 0v17" strokeDasharray="2 1" />
      </Svg>
      <X size={13} color="#b9bdc4" strokeWidth={3} className="ml-1" />
      <Wrench size={14} fill="#b9bdc4" color="#b9bdc4" strokeWidth={1} className="ml-2.5" />
    </div>
    <div className="flex flex-1 items-center rounded-r bg-[#b1b1b1] pr-1 pl-1">
      <Svg w={16} h={12}>
        <rect x="0.5" y="0.5" width="15" height="11" stroke="#444" />
        <path d="M0 1.5h16" stroke="#444" strokeWidth="2" />
        <path d="M3 5l2 1.5L3 8M7 9h4" stroke="#444" />
      </Svg>
      <Svg w={8} h={4} className="ml-0.5">
        <path d="M0.5 0h7L4 4z" fill="#444" stroke="none" />
      </Svg>
      <input
        aria-label="命令行"
        placeholder="键入命令"
        className="ml-1.5 h-6 min-w-0 flex-1 bg-transparent font-[Noto_Sans_CJK_SC,sans-serif] text-[13px] italic outline-none placeholder:text-[#4d4d4d]"
      />
      <Svg w={8} h={4}>
        <path d="M0.5 4h7L4 0z" fill="#444" stroke="none" />
      </Svg>
    </div>
  </div>
)

const Canvas = () => (
  <main className="relative min-h-0 flex-1 bg-black">
    <svg className="absolute inset-0 h-full w-full" fill="none" stroke="#fff" shapeRendering="crispEdges">
      <path d="M168 146l87-16 115 58-115 148L147 212" />
      <circle cx="694" cy="319" r="141" />
    </svg>
    <svg className="absolute bottom-4 left-4 h-[88px] w-[76px]" fill="none" stroke="#fff">
      <g shapeRendering="crispEdges">
        <rect x="0.5" y="78.5" width="8" height="8" />
        <path d="M4.5 33v50H54" />
      </g>
      <text x="7" y="30" fontSize="18" fontWeight="300" fill="#fff" stroke="none" fontFamily="Open Sans">
        Y
      </text>
      <text x="59" y="82" fontSize="18" fontWeight="300" fill="#fff" stroke="none" fontFamily="Open Sans">
        X
      </text>
    </svg>
    <div className="absolute top-2.5 right-[11px] flex items-center gap-2.5">
      <button aria-label="最小化图形">
        <Svg w={10}>
          <path d="M0 8.5h10" strokeWidth="3" stroke="#fff" />
        </Svg>
      </button>
      <button aria-label="还原图形">
        <Svg w={10}>
          <path d="M3 3V1h6v6H7M1 4h6v5H1z" strokeWidth="2" stroke="#fff" />
        </Svg>
      </button>
      <button aria-label="关闭图形">
        <Svg w={10}>
          <path d="M1 1l8 8M9 1L1 9" strokeWidth="2" stroke="#fff" />
        </Svg>
      </button>
    </div>
    <ViewCube />
    <NavBar />
    <CommandLine />
  </main>
)

/* ---------- status bar ---------- */

const Cell = ({ on, className = "", title, children }) => (
  <button
    aria-label={title}
    className={
      on
        ? `flex h-[22px] w-[22px] shrink-0 items-center justify-center bg-[#5789c2] ${className}`
        : `flex h-full shrink-0 items-center justify-center bg-[#3b4453] ${className}`
    }
  >
    {children}
  </button>
)

const Person = ({ children }) => (
  <Svg>
    <path d="M8 1l2 8 5 6-6-2-1-2-1 2-6 2 5-6z" fill={W} />
    {children}
  </Svg>
)

const layoutTabs = ["模型", "布局1", "布局2"]

const StatusBar = () => (
  <footer className="flex h-[25px] justify-between border-t border-[#3f4754] bg-[#222831]">
    <nav className="flex items-start pl-3">
      {layoutTabs.map((tab, i) => (
        <button
          key={tab}
          className={
            i === 0
              ? "h-[17px] w-[46px] bg-[#3b4453] font-bold leading-[17px] text-white [clip-path:polygon(0_0,100%_0,calc(100%-6px)_100%,6px_100%)]"
              : "ml-[3px] h-[17px] w-[50px] bg-[#2e3541] leading-[17px] text-[#c0c5cd] [clip-path:polygon(0_0,100%_0,calc(100%-6px)_100%,6px_100%)]"
          }
        >
          {tab}
        </button>
      ))}
      <button
        aria-label="新建布局"
        className="ml-1.5 flex h-[17px] w-6 items-center justify-center rounded-b bg-[#2e3541]"
      >
        <Svg w={8}>
          <path d="M4 0v8M0 4h8" strokeWidth="2" stroke="#b3b9c2" />
        </Svg>
      </button>
    </nav>

    <div className="flex items-center gap-0.5">
      <Cell className="w-[180px] justify-end pr-1 font-[Noto_Sans_CJK_SC,sans-serif]">1763.3634, 1121.8278, 0.0000</Cell>
      <Cell className="w-8">模型</Cell>
      <div className="flex h-full items-center bg-[#3b4453]">
        <Cell title="栅格" className="w-6">
          <Svg><path d="M4.5 0v16M8.5 0v16M12.5 0v16M0 4.5h16M0 8.5h16M0 12.5h16" /></Svg>
        </Cell>
        <Cell title="捕捉" className="w-6">
          <Svg><path d="M1 2h14M1 8h14M1 14h14" strokeWidth="2" strokeDasharray="2 4" /></Svg>
        </Cell>
        <Cell title="捕捉设置" className="w-[18px]"><Caret big /></Cell>
      </div>
      <Cell title="推断约束" className="w-6">
        <Svg><path d="M1 10h8v6H1z" fill={W} stroke="none" /><path d="M7.5 9V0.5h7v5h-5" /></Svg>
      </Cell>
      <Cell on title="动态输入">
        <Svg><path d="M4 2v7M0 5.5h8" stroke="#fff" /><rect x="7" y="10" width="9" height="4" fill="#fff" stroke="none" /></Svg>
      </Cell>
      <Cell title="正交" className="w-6">
        <Svg><path d="M1.5 0v14.5H16M1.5 9.5h5v5" /></Svg>
      </Cell>
      <Cell on title="极轴追踪">
        <Svg><circle cx="8" cy="9" r="5" stroke="#fff" /></Svg>
      </Cell>
      <Cell title="等轴测草图" className="w-[54px] justify-end pr-1.5"><Caret big /></Cell>
      <Cell on title="对象捕捉追踪">
        <Svg><path d="M14 1L1 13.5h15" stroke="#fff" /><Dot x={8} y={7} c="#fff" /></Svg>
      </Cell>
      <Cell on title="对象捕捉">
        <Svg><path d="M6 2.5h9.5v13h-13V6" stroke="#fff" /><rect x="0.5" y="0.5" width="4" height="4" stroke="#fff" /></Svg>
      </Cell>
      <Cell title="捕捉选项" className="w-3.5"><Caret big /></Cell>
      <Cell title="线宽" className="w-6">
        <Svg><path d="M0 3h7M9 3h7M0 7.5h16M0 12h9M10 12h6" strokeWidth="2" /></Svg>
      </Cell>
      <Cell on title="透明度">
        <Svg>
          <rect x="0.5" y="0.5" width="15" height="15" stroke="#fff" />
          <path d="M3 4h11M3 10h11" stroke="#fff" strokeWidth="3" strokeDasharray="3 3" />
          <path d="M6 7h8M6 13h8" stroke="#fff" strokeWidth="3" strokeDasharray="3 3" />
        </Svg>
      </Cell>
      <Cell title="选择循环" className="w-6">
        <Svg><rect x="5" y="6" width="10" height="10" fill={G} stroke="none" /><path d="M3 0v6M0 3h6M4.5 5v8" /></Svg>
      </Cell>
      <div className="flex h-full items-center bg-[#3b4453]">
        <Cell title="三维对象捕捉" className="w-6">
          <Svg><path d="M4.5 9V4.5l4-4h7v7l-4 4H7M4.5 4.5h7v7M11.5 4.5l4-4" /><rect x="0.5" y="10.5" width="4" height="4" stroke="#f2a66e" /></Svg>
        </Cell>
        <Cell title="三维捕捉选项" className="w-4"><Caret big /></Cell>
      </div>
      <Cell on title="动态 UCS">
        <Svg><path d="M2.5 1v12.5H15M0.5 3l2-2.5 2 2.5M13 11.5l2.5 2-2.5 2" stroke="#fff" /><path d="M10 2L6 7h3l-1 4 5-6h-3z" fill="#fff" stroke="none" /></Svg>
      </Cell>
      <div className="flex h-full items-center bg-[#3b4453]">
        <Cell title="选择过滤" className="w-6">
          <Svg><path d="M1.5 4.5h9v9h-9zM4 2l2-1.5h9v9L13 12" strokeDasharray="3 1" /><Dot x={2} y={14} /><Dot x={11} y={14} /><Dot x={11} y={4} /><Dot x={2} y={4} /></Svg>
        </Cell>
        <Cell title="过滤选项" className="w-3.5"><Caret big /></Cell>
      </div>
      <Cell on title="小控件">
        <Svg><path d="M8 1l-7 12h14zM8 1v8M1 13l7-4 7 4" stroke="#fff" /><circle cx="8" cy="8" r="6" stroke="#fff" /></Svg>
      </Cell>
      <Cell title="小控件选项" className="w-[18px]"><Caret big /></Cell>
      <Cell on title="注释可见性" className="text-white">
        <Person><circle cx="13" cy="4" r="2" stroke="#fff" /></Person>
      </Cell>
      <div className="flex h-full items-center bg-[#3b4453]">
        <Cell title="自动缩放" className="w-6"><Person><path d="M15 1l-3 3h2l-2 3" /></Person></Cell>
        <Cell title="注释比例" className="w-6"><Person /></Cell>
        <Cell className="gap-0.5 px-0.5 font-[Noto_Sans_CJK_SC,sans-serif]">1:1 / 100% <Caret big /></Cell>
      </div>
      <Cell title="切换工作空间" className="w-10 gap-1.5">
        <Settings size={16} color={W} strokeWidth={3} />
        <Caret big />
      </Cell>
      <Cell title="注释监视器" className="w-6">
        <Svg><path d="M8 0v16M0 8h16" strokeWidth="2" /></Svg>
      </Cell>
      <Cell className="w-[96px] gap-2 pr-1 pl-2 font-bold">
        <Svg w={8} h={16}><path d="M0 0h8v2H4v1h4v2H4v1h4v3H4v1h4v2H4v1h4v3H0z" fill={W} stroke="none" /></Svg>
        <span className="flex-1 pl-1 text-left">小数</span>
        <Caret big />
      </Cell>
      <Cell title="快捷特性" className="w-6">
        <Svg><rect x="2.5" y="0.5" width="11" height="15" /><path d="M2 2h12" strokeWidth="3" /><path d="M5 6.5h1M8 6.5h4M5 9.5h1M8 9.5h4M5 12.5h1M8 12.5h4" /></Svg>
      </Cell>
      <Cell title="锁定用户界面" className="w-11 gap-1.5">
        <Svg><path d="M5 10.5H0.5v-10h14V5M1 13.5h4" /><rect x="7" y="9" width="7" height="6" fill={W} stroke="none" /><path d="M12.5 9V6.5h3V9" /></Svg>
        <Caret big />
      </Cell>
      <Cell title="隔离对象" className="w-6">
        <Svg><rect x="0.5" y="0.5" width="6" height="5" /><circle cx="13" cy="7" r="2.5" /><path d="M6 10l3 5H3z" /></Svg>
      </Cell>
      <Cell on title="图形性能">
        <Svg><circle cx="8" cy="8" r="7" stroke="#fff" strokeWidth="2" /><path d="M6 10l6-6" stroke="#fff" strokeWidth="2" /></Svg>
      </Cell>
      <Cell title="全屏显示" className="w-6">
        <Svg><rect x="0.5" y="2.5" width="15" height="11" /><path d="M3 11l3-3M3 8.5V11h3M13 5l-3 3M10 5h3v3" /></Svg>
      </Cell>
      <Cell title="自定义" className="w-7">
        <Svg><path d="M0 2h16M0 8h16M0 14h16" strokeWidth="3" /></Svg>
      </Cell>
    </div>
  </footer>
)

/* ---------- overlays ---------- */

const Arrow = ({ x1, y1, x2, y2 }) => {
  const angle = (Math.atan2(y2 - y1, x2 - x1) * 180) / Math.PI
  const len = Math.hypot(x2 - x1, y2 - y1)
  return (
    <g transform={`translate(${x1} ${y1}) rotate(${angle})`}>
      <path d={`M0 0H${len - 20}`} stroke="#fb0d0d" strokeWidth="2.5" />
      <path d={`M${len} 0l-27 -8l3 8l-3 8z`} fill="#fb0d0d" />
    </g>
  )
}

const Arrows = () => (
  <svg className="pointer-events-none absolute inset-0 z-40 h-full w-full" fill="none">
    <Arrow x1={93} y1={211} x2={34} y2={53} />
    <Arrow x1={1193} y1={210} x2={1312} y2={108} />
    <Arrow x1={1200} y1={354} x2={1295} y2={313} />
  </svg>
)

const ImeBadge = () => (
  <div className="absolute bottom-[7px] left-[1048px] z-30 bg-black p-1 pt-[3px]">
    <div className="flex h-[25px] w-[60px] items-center justify-center gap-1 rounded bg-white text-[13px] text-[#333]">
      <span>CH</span>
      <Svg w={11} h={12}>
        <path d="M3 1c5 2 4 7-2 9 6 2 10-1 9-5-1-3-4-4-7-4z" stroke="#333" />
      </Svg>
      <span>简</span>
    </div>
  </div>
)

const Watermark = () => (
  <div className="pointer-events-none absolute right-[15px] bottom-1 z-30 flex h-[54px] w-[186px] justify-end">
    <svg className="absolute inset-0 h-full w-full" fill="none">
      <path d="M18 1h22l8 13L64 1h22L56 23l13 22H46L38 32C26 36 12 42 3 43c6-6 16-13 29-20z" fill="#a6a8ac" opacity=".85" />
      <path d="M45 30c8-14 24-18 34-6-12-5-24-2-34 6z" fill="#1d5d96" opacity=".9" />
      <path d="M76 22c6 14-2 28-32 30 18-5 26-16 25-28z" fill="#4b9a45" opacity=".8" />
    </svg>
    <span className="absolute bottom-6 -right-2 text-xs leading-4 text-[#1d5d96]">站</span>
    <span className="absolute right-0 bottom-0 text-base leading-5 text-[#3c9a50] opacity-50">www.xz7.com</span>
    <span className="relative mt-px mr-1.5 h-8 text-[29px] leading-8 font-black text-[#a6a8ac] opacity-90 [-webkit-text-stroke:2px_#a6a8ac]">
      自由互联
    </span>
  </div>
)

export default function App() {
  return (
    <div className="relative h-screen min-w-[1600px] overflow-hidden border-t border-[#2287ad] bg-white px-0.5 font-[Noto_Sans,Noto_Sans_CJK_SC,sans-serif] text-xs text-[#d9dde3]">
      <div className="flex h-full flex-col border-x-2 border-[#1c79a8] bg-[#222831] px-0.5">
        <TitleBar />
        <RibbonTabs />
        <Ribbon />
        <DocTabs />
        <Canvas />
        <StatusBar />
      </div>
      <Watermark />
      <ImeBadge />
      <Arrows />
    </div>
  )
}
